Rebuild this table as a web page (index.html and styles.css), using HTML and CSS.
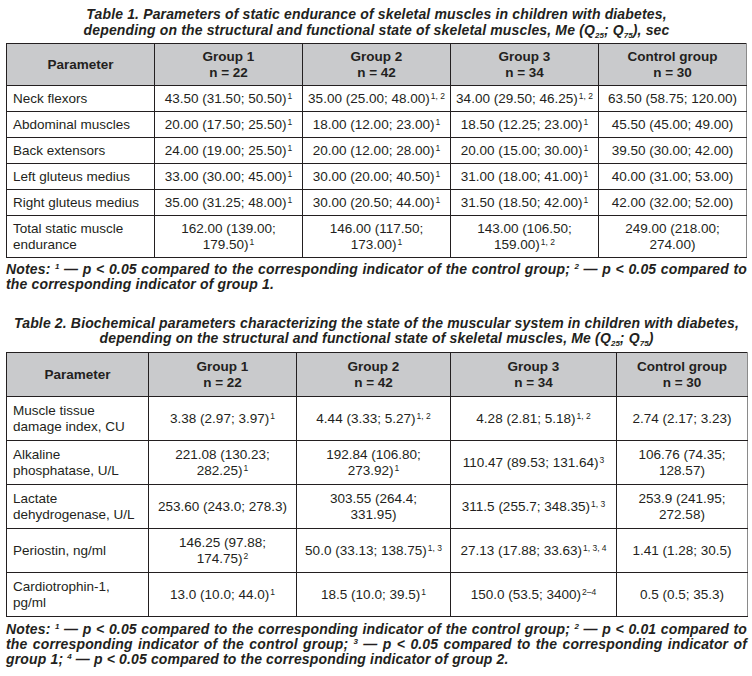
FILE: index.html
```html
<!DOCTYPE html>
<html>
<head>
<meta charset="utf-8">
<link rel="stylesheet" href="styles.css">
</head>
<body>
<div class="page">
  <p class="title t1">Table 1. Parameters of static endurance of skeletal muscles in children with diabetes,<br>depending on the structural and functional state of skeletal muscles, Me (Q<sub>25</sub>; Q<sub>75</sub>), sec</p>
  <table class="tbl tbl1">
    <colgroup><col class="c1a"><col class="c1b"><col class="c1b"><col class="c1b"><col class="c1b"></colgroup>
    <thead>
      <tr class="h1"><th>Parameter</th><th>Group 1<br>n = 22</th><th>Group 2<br>n = 42</th><th>Group 3<br>n = 34</th><th>Control group<br>n = 30</th></tr>
    </thead>
    <tbody>
      <tr class="r1"><td>Neck flexors</td><td>43.50 (31.50; 50.50)<sup>1</sup></td><td>35.00 (25.00; 48.00)<sup>1, 2</sup></td><td>34.00 (29.50; 46.25)<sup>1, 2</sup></td><td>63.50 (58.75; 120.00)</td></tr>
      <tr class="r1"><td>Abdominal muscles</td><td>20.00 (17.50; 25.50)<sup>1</sup></td><td>18.00 (12.00; 23.00)<sup>1</sup></td><td>18.50 (12.25; 23.00)<sup>1</sup></td><td>45.50 (45.00; 49.00)</td></tr>
      <tr class="r1"><td>Back extensors</td><td>24.00 (19.00; 25.50)<sup>1</sup></td><td>20.00 (12.00; 28.00)<sup>1</sup></td><td>20.00 (15.00; 30.00)<sup>1</sup></td><td>39.50 (30.00; 42.00)</td></tr>
      <tr class="r1"><td>Left gluteus medius</td><td>33.00 (30.00; 45.00)<sup>1</sup></td><td>30.00 (20.00; 40.50)<sup>1</sup></td><td>31.00 (18.00; 41.00)<sup>1</sup></td><td>40.00 (31.00; 53.00)</td></tr>
      <tr class="r1"><td>Right gluteus medius</td><td>35.00 (31.25; 48.00)<sup>1</sup></td><td>30.00 (20.50; 44.00)<sup>1</sup></td><td>31.50 (18.50; 42.00)<sup>1</sup></td><td>42.00 (32.00; 52.00)</td></tr>
      <tr class="r2"><td>Total static muscle endurance</td><td>162.00 (139.00;<br>179.50)<sup>1</sup></td><td>146.00 (117.50;<br>173.00)<sup>1</sup></td><td>143.00 (106.50;<br>159.00)<sup>1, 2</sup></td><td>249.00 (218.00;<br>274.00)</td></tr>
    </tbody>
  </table>
  <p class="notes n1">Notes: <sup>1</sup> — p &lt; 0.05 compared to the corresponding indicator of the control group; <sup>2</sup> — p &lt; 0.05 compared to the corresponding indicator of group 1.</p>

  <p class="title t2">Table 2. Biochemical parameters characterizing the state of the muscular system in children with diabetes,<br>depending on the structural and functional state of skeletal muscles, Me (Q<sub>25</sub>; Q<sub>75</sub>)</p>
  <table class="tbl tbl2">
    <colgroup><col class="c2a"><col class="c2b"><col class="c2c"><col class="c2d"><col class="c2e"></colgroup>
    <thead>
      <tr class="h2"><th>Parameter</th><th>Group 1<br>n = 22</th><th>Group 2<br>n = 42</th><th>Group 3<br>n = 34</th><th>Control group<br>n = 30</th></tr>
    </thead>
    <tbody>
      <tr class="r3"><td>Muscle tissue<br>damage index, CU</td><td>3.38 (2.97; 3.97)<sup>1</sup></td><td>4.44 (3.33; 5.27)<sup>1, 2</sup></td><td>4.28 (2.81; 5.18)<sup>1, 2</sup></td><td>2.74 (2.17; 3.23)</td></tr>
      <tr class="r3"><td>Alkaline<br>phosphatase, U/L</td><td>221.08 (130.23;<br>282.25)<sup>1</sup></td><td>192.84 (106.80;<br>273.92)<sup>1</sup></td><td>110.47 (89.53; 131.64)<sup>3</sup></td><td>106.76 (74.35;<br>128.57)</td></tr>
      <tr class="r3"><td>Lactate<br>dehydrogenase, U/L</td><td>253.60 (243.0; 278.3)</td><td>303.55 (264.4;<br>331.95)</td><td>311.5 (255.7; 348.35)<sup>1, 3</sup></td><td>253.9 (241.95;<br>272.58)</td></tr>
      <tr class="r3"><td>Periostin, ng/ml</td><td>146.25 (97.88;<br>174.75)<sup>2</sup></td><td>50.0 (33.13; 138.75)<sup>1, 3</sup></td><td>27.13 (17.88; 33.63)<sup>1, 3, 4</sup></td><td>1.41 (1.28; 30.5)</td></tr>
      <tr class="r3"><td>Cardiotrophin-1,<br>pg/ml</td><td>13.0 (10.0; 44.0)<sup>1</sup></td><td>18.5 (10.0; 39.5)<sup>1</sup></td><td>150.0 (53.5; 3400)<sup>2–4</sup></td><td>0.5 (0.5; 35.3)</td></tr>
    </tbody>
  </table>
  <p class="notes n2">Notes: <sup>1</sup> — p &lt; 0.05 compared to the corresponding indicator of the control group; <sup>2</sup> — p &lt; 0.01 compared to the corresponding indicator of the control group; <sup>3</sup> — p &lt; 0.05 compared to the corresponding indicator of group 1; <sup>4</sup> — p &lt; 0.05 compared to the corresponding indicator of group 2.</p>
</div>
</body>
</html>
```

FILE: styles.css
```css
html, body {
  margin: 0;
  padding: 0;
  background: #ffffff;
}

body {
  font-family: "Liberation Sans", Arial, sans-serif;
  color: #231f20;
  width: 752px;
}

.page {
  padding: 6px 5px 0 6px;
}

.title {
  margin: 0;
  font-weight: bold;
  font-style: italic;
  font-size: 14px;
  letter-spacing: 0.15px;
  line-height: 16px;
  text-align: center;
}

.title sub {
  font-size: 8px;
  line-height: 0;
  vertical-align: -3px;
  letter-spacing: 0;
}

.t1 {
  margin-bottom: 5px;
}

.t2 {
  margin-top: 24px;
  line-height: 15px;
  margin-bottom: 6px;
}

.tbl {
  border-collapse: collapse;
  table-layout: fixed;
  width: 741px;
  font-size: 13.5px;
  line-height: 16px;
}

.tbl th,
.tbl td {
  border: 1px solid #231f20;
  padding: 0 4px;
  text-align: center;
  vertical-align: middle;
}

.tbl th:last-child,
.tbl td:last-child {
  border-right-color: #8a8a8a;
}

.tbl th {
  background: #c9cacc;
  font-weight: bold;
}

.tbl td:first-child {
  text-align: left;
  padding-left: 6px;
}

.tbl sup {
  font-size: 8.5px;
  line-height: 0;
  vertical-align: 4px;
  margin-left: 1px;
}

.c1a, .c1b { width: 148px; }

.c2a { width: 142px; }
.c2b { width: 148px; }
.c2c { width: 154px; }
.c2d { width: 166px; }
.c2e { width: 131px; }

.h1 { height: 42px; }
.r1 { height: 26px; }
.r2 { height: 42px; }

.h2 { height: 44px; }
.r3 { height: 44px; }

.notes {
  margin: 0;
  font-weight: bold;
  font-style: italic;
  font-size: 14px;
  line-height: 15px;
  text-align: justify;
  letter-spacing: 0.15px;
}

.notes sup {
  font-size: 8px;
  line-height: 0;
  vertical-align: 5px;
  letter-spacing: 0;
}

.n1 {
  margin-top: 4px;
}

.n2 {
  margin-top: 5px;
}
```
